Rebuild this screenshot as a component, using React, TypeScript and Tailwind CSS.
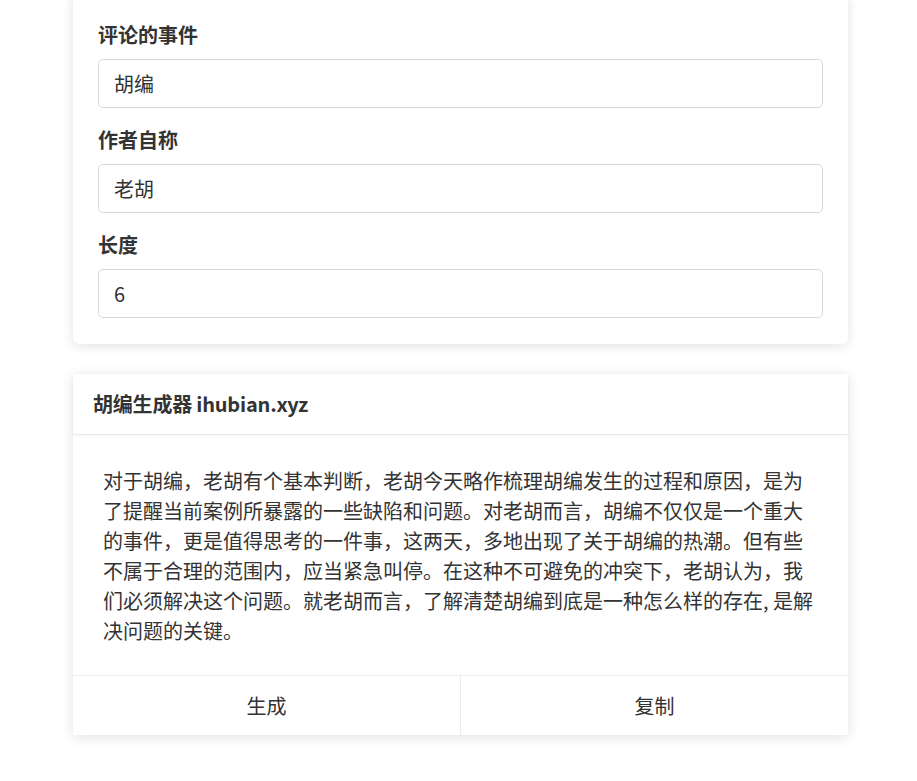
import React from "react";

const font = { fontFamily: '"Noto Sans CJK SC", "Noto Sans", sans-serif' };

function Field({ label, value }: { label: string; value: string }) {
  return (
    <div className="flex flex-col">
      <label className="text-[20px] leading-[30px] font-bold text-[#333] mb-[9px]">{label}</label>
      <input
        readOnly
        value={value}
        className="h-[49px] w-full rounded-[5px] border border-[#d9d9d9] bg-white px-[15px] text-[20px] text-[#333] outline-none"
        style={font}
      />
    </div>
  );
}

export default function App() {
  const text =
    "对于胡编，老胡有个基本判断，老胡今天略作梳理胡编发生的过程和原因，是为了提醒当前案例所暴露的一些缺陷和问题。对老胡而言，胡编不仅仅是一个重大的事件，更是值得思考的一件事，这两天，多地出现了关于胡编的热潮。但有些不属于合理的范围内，应当紧急叫停。在这种不可避免的冲突下，老胡认为，我们必须解决这个问题。就老胡而言，了解清楚胡编到底是一种怎么样的存在, 是解决问题的关键。";
  return (
    <div className="min-h-[781px] bg-white pb-[46px] overflow-hidden" style={font}>
      <div className="ml-[73px] w-[775px] -mt-[5px] rounded-[6px] bg-white px-[25px] pt-[25px] pb-[26px] shadow-[0_2px_12px_rgba(0,0,0,0.12)] flex flex-col gap-[17px]">
        <Field label="评论的事件" value="胡编" />
        <Field label="作者自称" value="老胡" />
        <Field label="长度" value="6" />
      </div>
      <div className="ml-[73px] w-[775px] mt-[30px] bg-white shadow-[0_2px_12px_rgba(0,0,0,0.12)]">
        <div className="h-[61px] flex items-center px-[20px] border-b border-[#ebebeb] shadow-[0_1px_3px_rgba(0,0,0,0.05)]">
          <span className="text-[20px] font-bold text-[#333] tracking-[-0.2px]">胡编生成器 ihubian.xyz</span>
        </div>
        <div className="px-[30px] pt-[31px] pb-[29px]">
          <p className="text-[20px] leading-[30px] text-[#333] break-all">{text}</p>
        </div>
        <div className="flex border-t border-[#ebebeb] h-[60px]">
          <button className="flex-1 flex items-center justify-center text-[20px] text-[#333] border-r border-[#ebebeb]" style={font}>
            生成
          </button>
          <button className="flex-1 flex items-center justify-center text-[20px] text-[#333]" style={font}>
            复制
          </button>
        </div>
      </div>
    </div>
  );
}
